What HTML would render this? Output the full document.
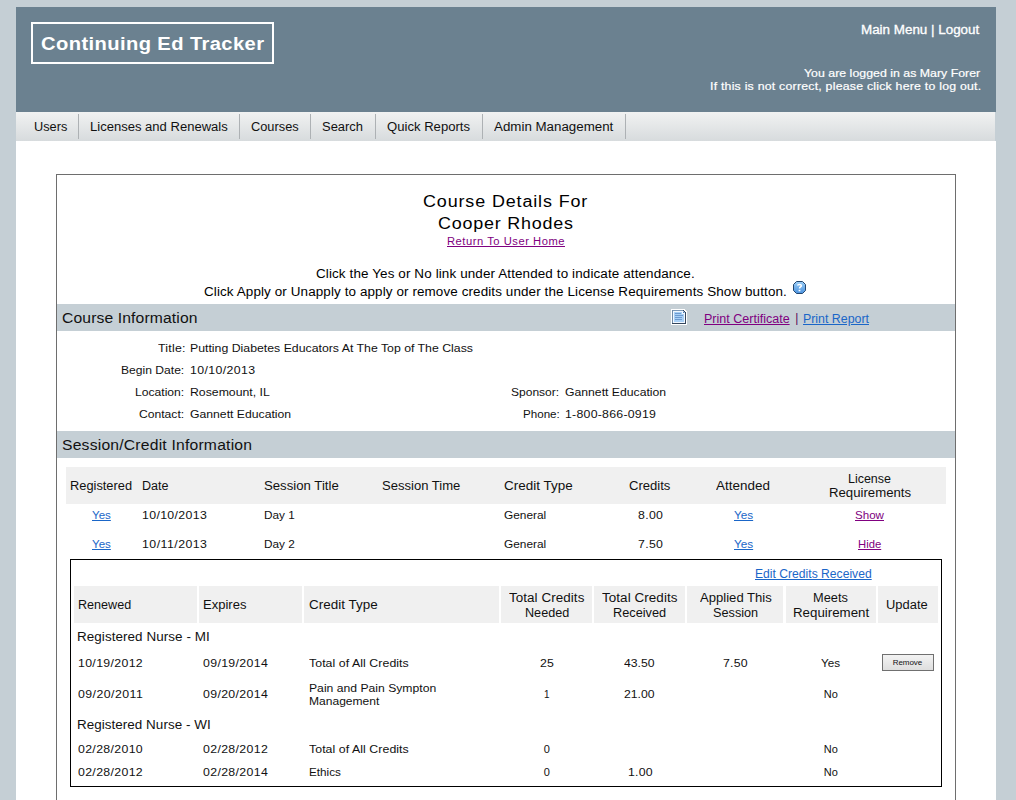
<!DOCTYPE html>
<html><head><meta charset="utf-8"><title>Continuing Ed Tracker</title>
<style>
html,body{margin:0;padding:0;}
body{width:1016px;height:800px;overflow:hidden;position:relative;background:#c5cfd5;font-family:"Liberation Sans",sans-serif;}
.t{position:absolute;white-space:nowrap;line-height:0;}
.t b{font-weight:bold;}
</style></head><body>
<div style="position:absolute;left:16px;top:7px;width:980px;height:105px;background:#6b8190"></div><div style="position:absolute;left:16px;top:112px;width:979px;height:29px;background:linear-gradient(#f1f2f2,#d7dbdd)"></div><div style="position:absolute;left:16px;top:141px;width:980px;height:700px;background:#fff"></div><div style="position:absolute;left:31px;top:22px;width:239px;height:38px;border:2px solid #fff"></div><div style="position:absolute;left:78px;top:114px;width:1px;height:25px;background:#adb1b4"></div><div style="position:absolute;left:239px;top:114px;width:1px;height:25px;background:#adb1b4"></div><div style="position:absolute;left:310px;top:114px;width:1px;height:25px;background:#adb1b4"></div><div style="position:absolute;left:375px;top:114px;width:1px;height:25px;background:#adb1b4"></div><div style="position:absolute;left:482px;top:114px;width:1px;height:25px;background:#adb1b4"></div><div style="position:absolute;left:625px;top:114px;width:1px;height:25px;background:#adb1b4"></div><div style="position:absolute;left:56px;top:174px;width:898px;height:700px;border:1px solid #6e6e6e"></div><div style="position:absolute;left:57px;top:304px;width:898px;height:27px;background:#c5cfd5"></div><div style="position:absolute;left:57px;top:431px;width:898px;height:27px;background:#c5cfd5"></div><div style="position:absolute;left:66px;top:467px;width:880px;height:37px;background:#f0f0f0"></div><div style="position:absolute;left:70px;top:559px;width:870px;height:226px;border:1px solid #000"></div><div style="position:absolute;left:74px;top:586px;width:123px;height:37px;background:#f0f0f0"></div><div style="position:absolute;left:199px;top:586px;width:103px;height:37px;background:#f0f0f0"></div><div style="position:absolute;left:304px;top:586px;width:195px;height:37px;background:#f0f0f0"></div><div style="position:absolute;left:501px;top:586px;width:91px;height:37px;background:#f0f0f0"></div><div style="position:absolute;left:594px;top:586px;width:91px;height:37px;background:#f0f0f0"></div><div style="position:absolute;left:687px;top:586px;width:96px;height:37px;background:#f0f0f0"></div><div style="position:absolute;left:786px;top:586px;width:90px;height:37px;background:#f0f0f0"></div><div style="position:absolute;left:878px;top:586px;width:60px;height:37px;background:#f0f0f0"></div><div style="position:absolute;left:882px;top:654px;width:50px;height:15px;border:1px solid #707070;background:linear-gradient(#f3f3f3,#dedede)"></div>

<svg style="position:absolute;left:793px;top:281px" width="13" height="13" viewBox="0 0 13 13">
<defs><linearGradient id="hg" x1="0" y1="0" x2="0" y2="1"><stop offset="0" stop-color="#9ccff8"/><stop offset="1" stop-color="#4b92de"/></linearGradient></defs>
<path d="M3.5 0.5H9.5L12.5 3.5V9.5L9.5 12.5H3.5L0.5 9.5V3.5Z" fill="url(#hg)" stroke="#23466f" stroke-width="1"/>
<path d="M4.6 4.6C4.6 3.2 8.4 3.2 8.4 4.8C8.4 6 6.5 6 6.5 7.6" fill="none" stroke="#fff" stroke-width="1.5"/>
<rect x="5.6" y="8.8" width="1.8" height="1.5" fill="#fff"/>
</svg>
<svg style="position:absolute;left:671px;top:309px" width="16" height="16" viewBox="0 0 16 16" shape-rendering="crispEdges">
<path d="M0 0H13L16 3V16H0Z" fill="#fff"/>
<path d="M1 1H12L15 4V15H1Z" fill="#34465c"/>
<rect x="1" y="1" width="11" height="1" fill="#7b97b5"/>
<rect x="1" y="1" width="1" height="13" fill="#6e8aa8"/>
<path d="M2 2H11L14 5V14H2Z" fill="#f2f8ff"/>
<rect x="3" y="3" width="10" height="10" fill="#a9d0f6"/>
<path d="M11 2H12L14 4V5H11Z" fill="#f2f8ff"/>
<rect x="4" y="4" width="6" height="1" fill="#6d9bd0"/>
<rect x="4" y="6" width="8" height="1" fill="#6d9bd0"/>
<rect x="4" y="8" width="7" height="1" fill="#6d9bd0"/>
<rect x="4" y="10" width="7" height="1" fill="#6d9bd0"/>
<path d="M12 2L14 4H12Z" fill="#4f7fb8" shape-rendering="auto"/>
</svg>

<div class="t" style="left:41.00px;top:44px;font-size:18px;letter-spacing:0.355px;color:#fff;transform:scaleX(1.1200);transform-origin:0 0;font-weight:bold">Continuing Ed Tracker</div><div class="t" style="left:861.00px;top:30px;font-size:12px;letter-spacing:0.000px;color:#fff;transform:scaleX(1.1168);transform-origin:0 0;-webkit-text-stroke:0.3px currentColor">Main Menu | Logout</div><div class="t" style="left:804.00px;top:73px;font-size:11px;letter-spacing:0.020px;color:#fff;transform:scaleX(1.1200);transform-origin:0 0;-webkit-text-stroke:0.2px currentColor">You are logged in as Mary Forer</div><div class="t" style="left:709.60px;top:86px;font-size:11px;letter-spacing:0.200px;color:#fff;transform:scaleX(1.1200);transform-origin:0 0;-webkit-text-stroke:0.2px currentColor">If this is not correct, please click here to log out.</div><div class="t" style="left:34.00px;top:127px;font-size:12px;letter-spacing:0.000px;color:#111;transform:scaleX(1.0645);transform-origin:0 0">Users</div><div class="t" style="left:90.00px;top:127px;font-size:12px;letter-spacing:-0.000px;color:#111;transform:scaleX(1.0866);transform-origin:0 0">Licenses and Renewals</div><div class="t" style="left:251.00px;top:127px;font-size:12px;letter-spacing:0.000px;color:#111;transform:scaleX(1.0667);transform-origin:0 0">Courses</div><div class="t" style="left:322.00px;top:127px;font-size:12px;letter-spacing:0.000px;color:#111;transform:scaleX(1.0789);transform-origin:0 0">Search</div><div class="t" style="left:387.00px;top:127px;font-size:12px;letter-spacing:0.000px;color:#111;transform:scaleX(1.0921);transform-origin:0 0">Quick Reports</div><div class="t" style="left:494.00px;top:127px;font-size:12px;letter-spacing:0.000px;color:#111;transform:scaleX(1.1111);transform-origin:0 0">Admin Management</div><div class="t" style="left:423.25px;top:202px;font-size:16px;letter-spacing:0.784px;color:#000;transform:scaleX(1.1200);transform-origin:0 0">Course Details For</div><div class="t" style="left:438.00px;top:224px;font-size:16px;letter-spacing:0.711px;color:#000;transform:scaleX(1.1200);transform-origin:0 0">Cooper Rhodes</div><div class="t" style="left:446.50px;top:242px;font-size:10px;letter-spacing:0.464px;color:#800080;transform:scaleX(1.1200);transform-origin:0 0;text-decoration:underline">Return To User Home</div><div class="t" style="left:316.00px;top:274px;font-size:12px;letter-spacing:0.105px;color:#000;transform:scaleX(1.1200);transform-origin:0 0">Click the Yes or No link under Attended to indicate attendance.</div><div class="t" style="left:204.00px;top:292px;font-size:12px;letter-spacing:0.095px;color:#000;transform:scaleX(1.1200);transform-origin:0 0">Click Apply or Unapply to apply or remove credits under the License Requirements Show button.</div><div class="t" style="left:62.00px;top:318px;font-size:14px;letter-spacing:0.111px;color:#111;transform:scaleX(1.1200);transform-origin:0 0">Course Information</div><div class="t" style="left:704.40px;top:319px;font-size:12px;letter-spacing:-0.000px;color:#800080;transform:scaleX(1.0439);transform-origin:0 0;text-decoration:underline">Print Certificate</div><div class="t" style="left:795.20px;top:318px;font-size:12px;letter-spacing:0.000px;color:#5a0a5a">|</div><div class="t" style="left:803.00px;top:319px;font-size:12px;letter-spacing:0.000px;color:#1a66c8;transform:scaleX(1.0308);transform-origin:0 0;text-decoration:underline">Print Report</div><div class="t" style="left:157.50px;top:348px;font-size:11px;letter-spacing:0.204px;color:#111;transform:scaleX(1.1200);transform-origin:0 0">Title:</div><div class="t" style="left:120.60px;top:370px;font-size:11px;letter-spacing:0.000px;color:#111;transform:scaleX(1.1000);transform-origin:0 0">Begin Date:</div><div class="t" style="left:134.80px;top:392px;font-size:11px;letter-spacing:0.000px;color:#111;transform:scaleX(1.1022);transform-origin:0 0">Location:</div><div class="t" style="left:139.20px;top:414px;font-size:11px;letter-spacing:0.000px;color:#111;transform:scaleX(1.1024);transform-origin:0 0">Contact:</div><div class="t" style="left:190.00px;top:348px;font-size:11px;letter-spacing:0.000px;color:#111;transform:scaleX(1.1177);transform-origin:0 0">Putting Diabetes Educators At The Top of The Class</div><div class="t" style="left:190.00px;top:370px;font-size:11px;letter-spacing:0.337px;color:#111;transform:scaleX(1.1200);transform-origin:0 0">10/10/2013</div><div class="t" style="left:190.00px;top:392px;font-size:11px;letter-spacing:0.000px;color:#111;transform:scaleX(1.1153);transform-origin:0 0">Rosemount, IL</div><div class="t" style="left:190.00px;top:414px;font-size:11px;letter-spacing:0.000px;color:#111;transform:scaleX(1.1099);transform-origin:0 0">Gannett Education</div><div class="t" style="left:511.40px;top:392px;font-size:11px;letter-spacing:0.000px;color:#111;transform:scaleX(1.0932);transform-origin:0 0">Sponsor:</div><div class="t" style="left:565.40px;top:392px;font-size:11px;letter-spacing:0.000px;color:#111;transform:scaleX(1.1099);transform-origin:0 0">Gannett Education</div><div class="t" style="left:522.60px;top:414px;font-size:11px;letter-spacing:0.000px;color:#111;transform:scaleX(1.0543);transform-origin:0 0">Phone:</div><div class="t" style="left:565.40px;top:414px;font-size:11px;letter-spacing:0.223px;color:#111;transform:scaleX(1.1200);transform-origin:0 0">1-800-866-0919</div><div class="t" style="left:62.00px;top:445px;font-size:14px;letter-spacing:0.186px;color:#111;transform:scaleX(1.1200);transform-origin:0 0">Session/Credit Information</div><div class="t" style="left:70.30px;top:486px;font-size:12px;letter-spacing:0.000px;color:#111;transform:scaleX(1.0690);transform-origin:0 0">Registered</div><div class="t" style="left:142.00px;top:486px;font-size:12px;letter-spacing:-0.000px;color:#111;transform:scaleX(1.0462);transform-origin:0 0">Date</div><div class="t" style="left:263.70px;top:486px;font-size:12px;letter-spacing:0.000px;color:#111;transform:scaleX(1.0985);transform-origin:0 0">Session Title</div><div class="t" style="left:382.10px;top:486px;font-size:12px;letter-spacing:0.000px;color:#111;transform:scaleX(1.0875);transform-origin:0 0">Session Time</div><div class="t" style="left:504.00px;top:486px;font-size:12px;letter-spacing:0.025px;color:#111;transform:scaleX(1.1200);transform-origin:0 0">Credit Type</div><div class="t" style="left:629.30px;top:486px;font-size:12px;letter-spacing:0.000px;color:#111;transform:scaleX(1.0895);transform-origin:0 0">Credits</div><div class="t" style="left:716.00px;top:486px;font-size:12px;letter-spacing:0.031px;color:#111;transform:scaleX(1.1200);transform-origin:0 0">Attended</div><div class="t" style="left:848.20px;top:479px;font-size:12px;letter-spacing:0.000px;color:#111;transform:scaleX(1.0381);transform-origin:0 0">License</div><div class="t" style="left:828.80px;top:493px;font-size:12px;letter-spacing:0.000px;color:#111;transform:scaleX(1.0987);transform-origin:0 0">Requirements</div><div class="t" style="left:91.85px;top:515px;font-size:11px;letter-spacing:0.000px;color:#1a66c8;transform:scaleX(1.0500);transform-origin:0 0;text-decoration:underline">Yes</div><div class="t" style="left:142.00px;top:515px;font-size:11px;letter-spacing:0.308px;color:#111;transform:scaleX(1.1200);transform-origin:0 0">10/10/2013</div><div class="t" style="left:263.70px;top:515px;font-size:11px;letter-spacing:0.000px;color:#111;transform:scaleX(1.0690);transform-origin:0 0">Day 1</div><div class="t" style="left:504.00px;top:515px;font-size:11px;letter-spacing:0.000px;color:#111;transform:scaleX(1.0769);transform-origin:0 0">General</div><div class="t" style="left:637.75px;top:515px;font-size:11px;letter-spacing:0.292px;color:#111;transform:scaleX(1.1200);transform-origin:0 0">8.00</div><div class="t" style="left:733.70px;top:515px;font-size:11px;letter-spacing:0.000px;color:#1a66c8;transform:scaleX(1.0667);transform-origin:0 0;text-decoration:underline">Yes</div><div class="t" style="left:855.25px;top:515px;font-size:11px;letter-spacing:0.000px;color:#800080;transform:scaleX(1.0536);transform-origin:0 0;text-decoration:underline">Show</div><div class="t" style="left:91.85px;top:544px;font-size:11px;letter-spacing:0.000px;color:#1a66c8;transform:scaleX(1.0500);transform-origin:0 0;text-decoration:underline">Yes</div><div class="t" style="left:142.00px;top:544px;font-size:11px;letter-spacing:0.419px;color:#111;transform:scaleX(1.1200);transform-origin:0 0">10/11/2013</div><div class="t" style="left:263.70px;top:544px;font-size:11px;letter-spacing:0.000px;color:#111;transform:scaleX(1.0690);transform-origin:0 0">Day 2</div><div class="t" style="left:504.00px;top:544px;font-size:11px;letter-spacing:0.000px;color:#111;transform:scaleX(1.0769);transform-origin:0 0">General</div><div class="t" style="left:637.75px;top:544px;font-size:11px;letter-spacing:0.292px;color:#111;transform:scaleX(1.1200);transform-origin:0 0">7.50</div><div class="t" style="left:733.70px;top:544px;font-size:11px;letter-spacing:0.000px;color:#1a66c8;transform:scaleX(1.0667);transform-origin:0 0;text-decoration:underline">Yes</div><div class="t" style="left:858.20px;top:544px;font-size:11px;letter-spacing:0.000px;color:#800080;transform:scaleX(1.0261);transform-origin:0 0;text-decoration:underline">Hide</div><div class="t" style="left:755.00px;top:574px;font-size:12px;letter-spacing:-0.000px;color:#1a66c8;transform:scaleX(1.0113);transform-origin:0 0;text-decoration:underline">Edit Credits Received</div><div class="t" style="left:78.00px;top:605px;font-size:12px;letter-spacing:0.000px;color:#111;transform:scaleX(1.0490);transform-origin:0 0">Renewed</div><div class="t" style="left:203.20px;top:605px;font-size:12px;letter-spacing:0.000px;color:#111;transform:scaleX(1.0850);transform-origin:0 0">Expires</div><div class="t" style="left:308.90px;top:605px;font-size:12px;letter-spacing:0.025px;color:#111;transform:scaleX(1.1200);transform-origin:0 0">Credit Type</div><div class="t" style="left:508.75px;top:598px;font-size:12px;letter-spacing:0.049px;color:#111;transform:scaleX(1.1200);transform-origin:0 0">Total Credits</div><div class="t" style="left:524.50px;top:613px;font-size:12px;letter-spacing:0.000px;color:#111;transform:scaleX(1.0524);transform-origin:0 0">Needed</div><div class="t" style="left:602.00px;top:598px;font-size:12px;letter-spacing:0.057px;color:#111;transform:scaleX(1.1200);transform-origin:0 0">Total Credits</div><div class="t" style="left:613.35px;top:613px;font-size:12px;letter-spacing:0.000px;color:#111;transform:scaleX(1.0620);transform-origin:0 0">Received</div><div class="t" style="left:699.50px;top:598px;font-size:12px;letter-spacing:0.000px;color:#111;transform:scaleX(1.0909);transform-origin:0 0">Applied This</div><div class="t" style="left:712.75px;top:613px;font-size:12px;letter-spacing:-0.000px;color:#111;transform:scaleX(1.0581);transform-origin:0 0">Session</div><div class="t" style="left:813.20px;top:598px;font-size:12px;letter-spacing:0.000px;color:#111;transform:scaleX(1.0667);transform-origin:0 0">Meets</div><div class="t" style="left:792.55px;top:613px;font-size:12px;letter-spacing:0.000px;color:#111;transform:scaleX(1.1087);transform-origin:0 0">Requirement</div><div class="t" style="left:886.20px;top:605px;font-size:12px;letter-spacing:0.000px;color:#111;transform:scaleX(1.0769);transform-origin:0 0">Update</div><div class="t" style="left:76.90px;top:637px;font-size:12px;letter-spacing:0.056px;color:#111;transform:scaleX(1.1200);transform-origin:0 0">Registered Nurse - MI</div><div class="t" style="left:76.90px;top:725px;font-size:12px;letter-spacing:0.032px;color:#111;transform:scaleX(1.1200);transform-origin:0 0">Registered Nurse - WI</div><div class="t" style="left:77.90px;top:663px;font-size:11px;letter-spacing:0.298px;color:#111;transform:scaleX(1.1200);transform-origin:0 0">10/19/2012</div><div class="t" style="left:203.30px;top:663px;font-size:11px;letter-spacing:0.308px;color:#111;transform:scaleX(1.1200);transform-origin:0 0">09/19/2014</div><div class="t" style="left:308.80px;top:663px;font-size:11px;letter-spacing:0.053px;color:#111;transform:scaleX(1.1200);transform-origin:0 0">Total of All Credits</div><div class="t" style="left:539.95px;top:663px;font-size:11px;letter-spacing:0.054px;color:#111;transform:scaleX(1.1200);transform-origin:0 0">25</div><div class="t" style="left:624.45px;top:663px;font-size:11px;letter-spacing:0.000px;color:#111;transform:scaleX(1.1107);transform-origin:0 0">43.50</div><div class="t" style="left:723.45px;top:663px;font-size:11px;letter-spacing:0.173px;color:#111;transform:scaleX(1.1200);transform-origin:0 0">7.50</div><div class="t" style="left:821.25px;top:663px;font-size:11px;letter-spacing:0.000px;color:#111;transform:scaleX(1.0611);transform-origin:0 0">Yes</div><div class="t" style="left:77.90px;top:694px;font-size:11px;letter-spacing:0.409px;color:#111;transform:scaleX(1.1200);transform-origin:0 0">09/20/2011</div><div class="t" style="left:203.30px;top:694px;font-size:11px;letter-spacing:0.308px;color:#111;transform:scaleX(1.1200);transform-origin:0 0">09/20/2014</div><div class="t" style="left:544.00px;top:694px;font-size:11px;letter-spacing:0.000px;color:#111;transform:scaleX(0.9000);transform-origin:0 0">1</div><div class="t" style="left:624.45px;top:694px;font-size:11px;letter-spacing:0.000px;color:#111;transform:scaleX(1.1107);transform-origin:0 0">21.00</div><div class="t" style="left:823.80px;top:694px;font-size:11px;letter-spacing:0.000px;color:#111">No</div><div class="t" style="left:77.90px;top:749px;font-size:11px;letter-spacing:0.298px;color:#111;transform:scaleX(1.1200);transform-origin:0 0">02/28/2010</div><div class="t" style="left:203.30px;top:749px;font-size:11px;letter-spacing:0.308px;color:#111;transform:scaleX(1.1200);transform-origin:0 0">02/28/2012</div><div class="t" style="left:308.80px;top:749px;font-size:11px;letter-spacing:0.053px;color:#111;transform:scaleX(1.1200);transform-origin:0 0">Total of All Credits</div><div class="t" style="left:543.70px;top:749px;font-size:11px;letter-spacing:0.000px;color:#111">0</div><div class="t" style="left:823.80px;top:749px;font-size:11px;letter-spacing:0.000px;color:#111">No</div><div class="t" style="left:77.90px;top:772px;font-size:11px;letter-spacing:0.298px;color:#111;transform:scaleX(1.1200);transform-origin:0 0">02/28/2012</div><div class="t" style="left:203.30px;top:772px;font-size:11px;letter-spacing:0.308px;color:#111;transform:scaleX(1.1200);transform-origin:0 0">02/28/2014</div><div class="t" style="left:308.80px;top:772px;font-size:11px;letter-spacing:0.000px;color:#111;transform:scaleX(1.0633);transform-origin:0 0">Ethics</div><div class="t" style="left:543.70px;top:772px;font-size:11px;letter-spacing:0.000px;color:#111">0</div><div class="t" style="left:627.95px;top:772px;font-size:11px;letter-spacing:0.173px;color:#111;transform:scaleX(1.1200);transform-origin:0 0">1.00</div><div class="t" style="left:823.80px;top:772px;font-size:11px;letter-spacing:0.000px;color:#111">No</div><div class="t" style="left:308.80px;top:688px;font-size:11px;letter-spacing:0.000px;color:#111;transform:scaleX(1.1061);transform-origin:0 0">Pain and Pain Sympton</div><div class="t" style="left:308.80px;top:701px;font-size:11px;letter-spacing:0.000px;color:#111;transform:scaleX(1.0953);transform-origin:0 0">Management</div><div class="t" style="left:892.80px;top:663px;font-size:8px;letter-spacing:-0.080px;color:#111">Remove</div>
</body></html>
